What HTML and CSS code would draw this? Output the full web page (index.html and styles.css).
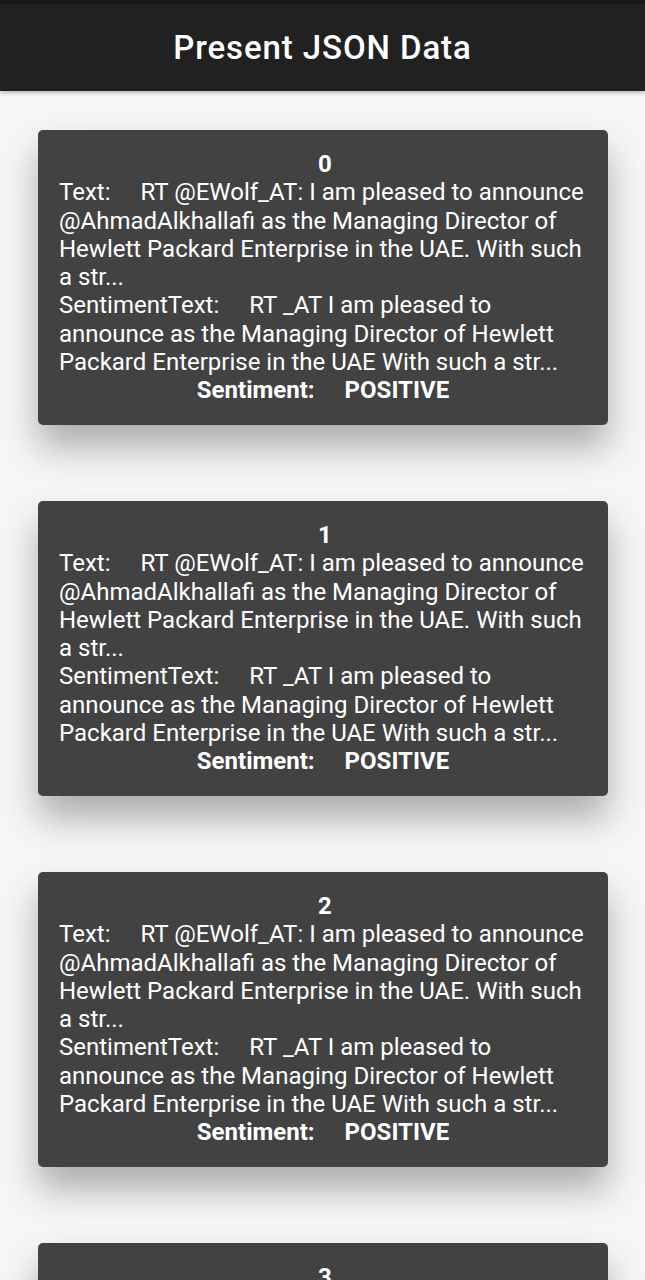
FILE: index.html
```html
<!DOCTYPE html>
<html>
<head>
<meta charset="utf-8">
<link rel="stylesheet" href="styles.css">
</head>
<body>
<header class="appbar"><h1 class="title">Present JSON Data</h1></header>
<main class="list">
  <section class="card">
    <div class="idx">0</div>
    <p class="field"><span>Text:</span><span class="gap"></span>RT @EWolf_AT: I am pleased to announce @AhmadAlkhallafi as the Managing Director of Hewlett Packard Enterprise in the UAE. With such a str...</p>
    <p class="field"><span>SentimentText:</span><span class="gap"></span>RT _AT I am pleased to announce as the Managing Director of Hewlett Packard Enterprise in the UAE With such a str...</p>
    <div class="sent"><span>Sentiment:</span><span class="gap"></span><span>POSITIVE</span></div>
  </section>
  <section class="card">
    <div class="idx">1</div>
    <p class="field"><span>Text:</span><span class="gap"></span>RT @EWolf_AT: I am pleased to announce @AhmadAlkhallafi as the Managing Director of Hewlett Packard Enterprise in the UAE. With such a str...</p>
    <p class="field"><span>SentimentText:</span><span class="gap"></span>RT _AT I am pleased to announce as the Managing Director of Hewlett Packard Enterprise in the UAE With such a str...</p>
    <div class="sent"><span>Sentiment:</span><span class="gap"></span><span>POSITIVE</span></div>
  </section>
  <section class="card">
    <div class="idx">2</div>
    <p class="field"><span>Text:</span><span class="gap"></span>RT @EWolf_AT: I am pleased to announce @AhmadAlkhallafi as the Managing Director of Hewlett Packard Enterprise in the UAE. With such a str...</p>
    <p class="field"><span>SentimentText:</span><span class="gap"></span>RT _AT I am pleased to announce as the Managing Director of Hewlett Packard Enterprise in the UAE With such a str...</p>
    <div class="sent"><span>Sentiment:</span><span class="gap"></span><span>POSITIVE</span></div>
  </section>
  <section class="card">
    <div class="idx">3</div>
    <p class="field"><span>Text:</span><span class="gap"></span>RT @EWolf_AT: I am pleased to announce @AhmadAlkhallafi as the Managing Director of Hewlett Packard Enterprise in the UAE. With such a str...</p>
    <p class="field"><span>SentimentText:</span><span class="gap"></span>RT _AT I am pleased to announce as the Managing Director of Hewlett Packard Enterprise in the UAE With such a str...</p>
    <div class="sent"><span>Sentiment:</span><span class="gap"></span><span>POSITIVE</span></div>
  </section>
</main>
</body>
</html>
```
FILE: styles.css
```css
html, body {
  margin: 0;
  padding: 0;
}
body {
  background: #f6f6f6;
  font-family: Roboto, "Noto Sans", sans-serif;
  color: #ffffff;
  height: 1280px;
  overflow: hidden;
}
.appbar {
  height: 91px;
  background: #212121;
  border-top: 4px solid #1a1a1a;
  box-sizing: border-box;
  display: flex;
  align-items: center;
  justify-content: center;
  box-shadow: 0 2px 4px rgba(0,0,0,0.25);
  position: relative;
  z-index: 1;
}
.title {
  margin: 0;
  font-size: 33px;
  font-weight: 500;
  letter-spacing: 0.9px;
  color: #fff;
  padding-top: 0;
}
.list {
  display: flex;
  flex-direction: column;
  gap: 76px;
  padding: 39px 37px 0 38px;
}
.card {
  background: #424242;
  border-radius: 5px;
  padding: 20px 21px 19px 21px;
  height: 295px;
  box-sizing: border-box;
  box-shadow: 0 22px 36px rgba(0,0,0,0.3);
  font-size: 24px;
  line-height: 28.3px;
}
.idx {
  text-align: center;
  font-weight: 700;
  padding-left: 4px;
}
.field {
  margin: 0;
}
.gap {
  display: inline-block;
  width: 30px;
}
.sent {
  text-align: center;
  font-weight: 700;
}
```
